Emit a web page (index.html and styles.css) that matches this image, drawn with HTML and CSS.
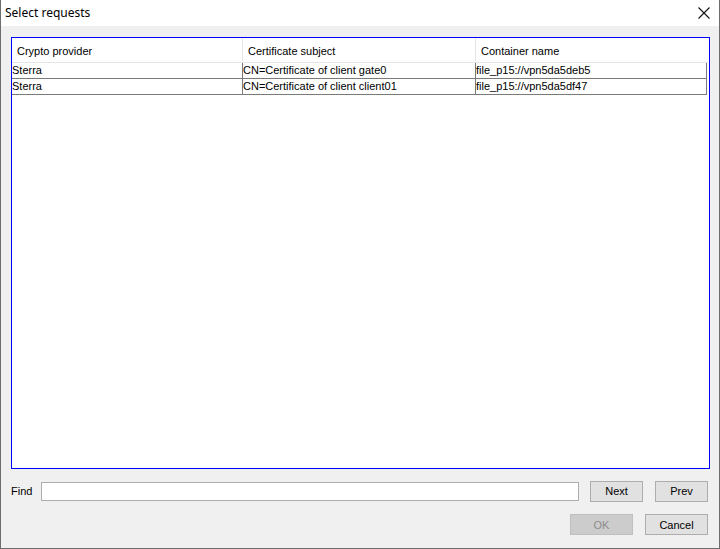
FILE: index.html
```html
<!DOCTYPE html>
<html>
<head>
<meta charset="utf-8">
<link rel="stylesheet" href="styles.css">
</head>
<body>
<div class="window">
  <div class="titlebar">
    <span class="title">Select requests</span>
    <svg class="close" width="12" height="12" viewBox="0 0 12 12"><path d="M0.5 0.5 L11.5 11.5 M11.5 0.5 L0.5 11.5" stroke="#111" stroke-width="1.1" fill="none"/></svg>
  </div>
  <div class="content">
    <div class="table-box">
      <div class="grid head">
        <div class="hc">Crypto provider</div>
        <div class="hc">Certificate subject</div>
        <div class="hc last">Container name</div>
      </div>
      <div class="grid row">
        <div class="c">Sterra</div>
        <div class="c">CN=Certificate of client gate0</div>
        <div class="c">file_p15://vpn5da5deb5</div>
      </div>
      <div class="grid row">
        <div class="c">Sterra</div>
        <div class="c">CN=Certificate of client client01</div>
        <div class="c">file_p15://vpn5da5df47</div>
      </div>
    </div>
    <div class="find-row">
      <span class="find-label">Find</span>
      <div class="input"></div>
      <div class="btn btn-next">Next</div>
      <div class="btn btn-prev">Prev</div>
    </div>
    <div class="action-row">
      <div class="btn btn-wide disabled">OK</div>
      <div class="btn btn-wide">Cancel</div>
    </div>
  </div>
</div>
</body>
</html>
```

FILE: styles.css
```css
html, body {
  margin: 0;
  padding: 0;
}
body {
  width: 720px;
  height: 549px;
  overflow: hidden;
  background: #f0f0f0;
  font-family: "Liberation Sans", Arial, sans-serif;
  font-size: 11px;
  color: #000;
}
.window {
  width: 720px;
  height: 549px;
  box-sizing: border-box;
  border-left: 1px solid #6d6d6d;
  border-right: 1px solid #6d6d6d;
  border-bottom: 1px solid #6d6d6d;
  display: flex;
  flex-direction: column;
}
.titlebar {
  height: 26px;
  background: #fff;
  display: flex;
  align-items: center;
  justify-content: space-between;
  padding: 0 9px 0 4px;
  flex: none;
}
.title {
  font-family: "Noto Sans", "Open Sans", sans-serif;
  font-size: 12px;
  color: #000;
  margin-top: -1px;
}
.close {
  display: block;
  margin-top: -1px;
}
.content {
  flex: 1;
  background: #f0f0f0;
  padding: 11px 9px 0 10px;
  display: flex;
  flex-direction: column;
}
.table-box {
  height: 432px;
  box-sizing: border-box;
  border: 1px solid #0000ff;
  background: #fff;
  padding-right: 1px;
}
.grid {
  display: grid;
  grid-template-columns: 231px 233px 232px;
}
.head {
  height: 25px;
  box-sizing: border-box;
  border-bottom: 1px solid #e5e5e5;
}
.hc {
  border-right: 1px solid #e5e5e5;
  padding: 7px 0 0 5px;
  white-space: nowrap;
}
.hc.last {
  border-right: none;
}
.row {
  height: 16px;
  box-sizing: border-box;
  border-bottom: 1px solid #7a7a7a;
  border-right: 1px solid #7a7a7a;
  margin-right: 1px;
  color: #000;
}
.c {
  border-right: 1px solid #7a7a7a;
  padding: 1px 0 0 0;
  line-height: 13px;
  white-space: nowrap;
  overflow: hidden;
}
.c:last-child {
  border-right: none;
}
.find-row {
  display: flex;
  align-items: center;
  margin-top: 12px;
  height: 20px;
}
.find-label {
  width: 30px;
  font-size: 11px;
}
.input {
  width: 538px;
  height: 19px;
  box-sizing: border-box;
  border: 1px solid #adadad;
  background: #fff;
}
.btn {
  box-sizing: border-box;
  height: 21px;
  border: 1px solid #adadad;
  background: #e1e1e1;
  display: flex;
  align-items: center;
  justify-content: center;
  font-size: 11px;
}
.btn-next {
  width: 53px;
  margin-left: 11px;
}
.btn-prev {
  width: 53px;
  margin-left: 12px;
}
.action-row {
  display: flex;
  justify-content: flex-end;
  gap: 12px;
  margin-top: 13px;
  padding-right: 2px;
}
.btn-wide {
  width: 63px;
}
.disabled {
  background: #cccccc;
  border-color: #bfbfbf;
  color: #8b8b8b;
}
```
